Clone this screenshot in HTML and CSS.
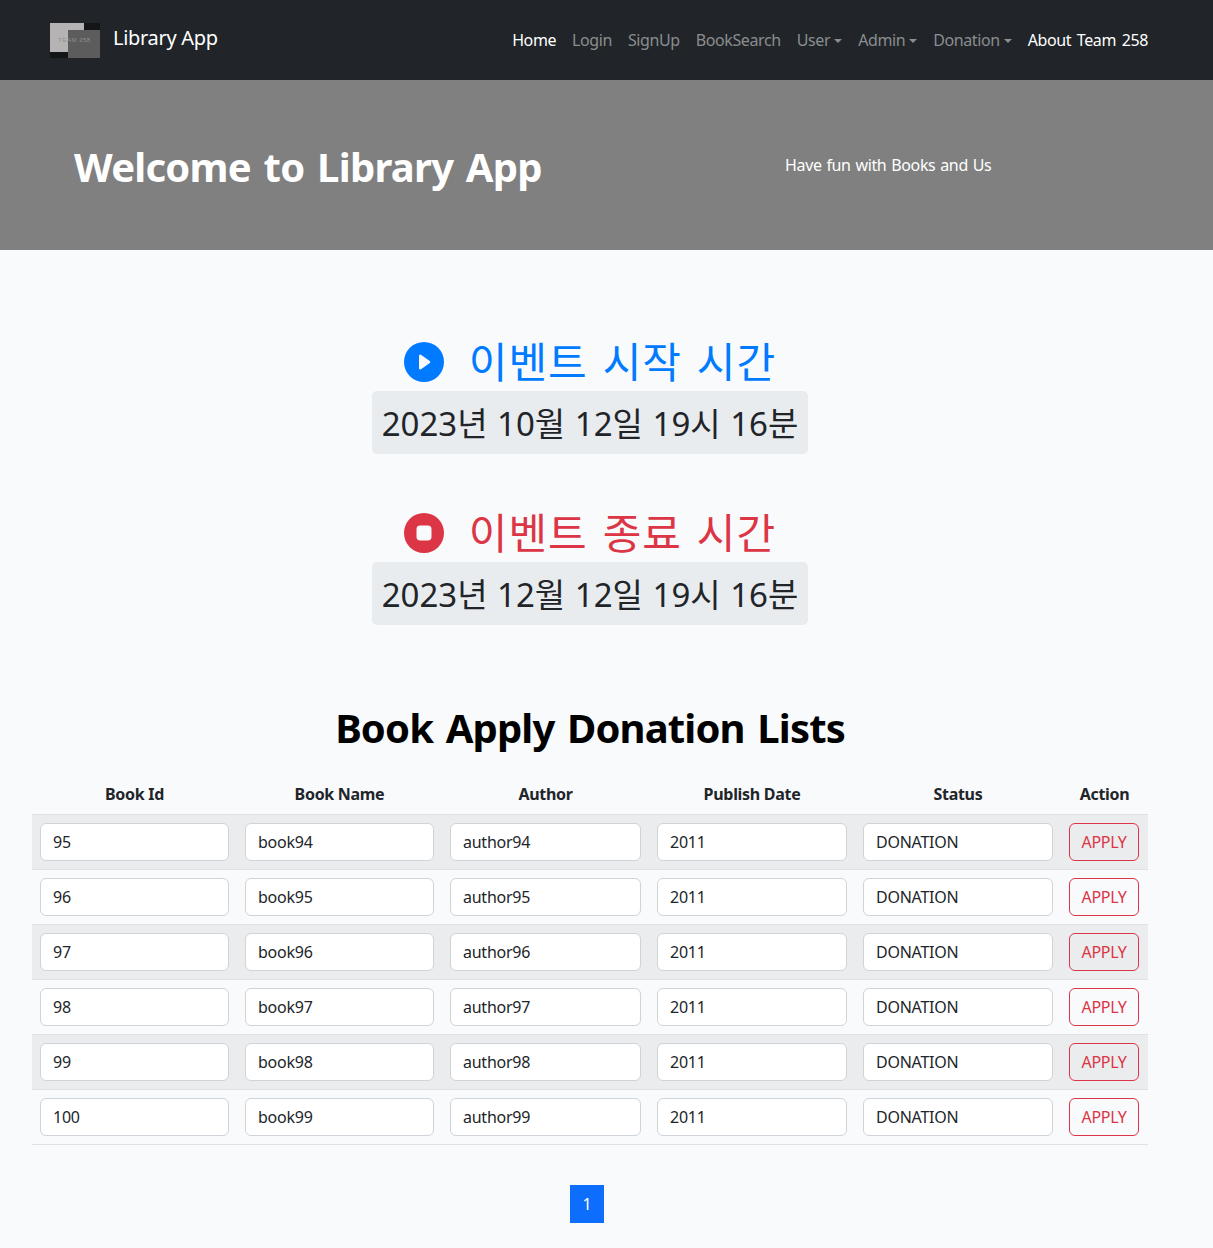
FILE: index.html
```html
<!DOCTYPE html>
<html lang="ko">
<head>
    <meta charset="UTF-8">
    <meta name="viewport" content="width=device-width, initial-scale=1.0">
    <title>Library App</title>
    <link rel="stylesheet" href="styles.css">
</head>
<body>

    <!-- Navbar -->
    <nav class="navbar">
        <a class="brand" href="#">
            <svg class="brand-logo" width="50" height="35" viewBox="0 0 50 35">
                <rect width="50" height="35" fill="#141516"/>
                <rect width="34" height="29" fill="#b5b3b3"/>
                <rect x="18" y="7" width="32" height="28" fill="#5c5c5c"/>
                <text x="24.5" y="19" text-anchor="middle" font-size="6" letter-spacing="0.5" fill="#8f8f8f" font-family="Liberation Sans">TEAM 258</text>
            </svg>
            Library App
        </a>
        <ul class="nav-links">
            <li><a class="nav-link active" href="#">Home</a></li>
            <li><a class="nav-link" href="#">Login</a></li>
            <li><a class="nav-link" href="#">SignUp</a></li>
            <li><a class="nav-link" href="#">BookSearch</a></li>
            <li><a class="nav-link caret" href="#">User</a></li>
            <li><a class="nav-link caret" href="#">Admin</a></li>
            <li><a class="nav-link caret" href="#">Donation</a></li>
            <li><a class="nav-link active" href="#">About Team 258</a></li>
        </ul>
    </nav>

    <!-- Hero -->
    <header class="hero">
        <h1>Welcome to Library App</h1>
        <p class="lead">Have fun with Books and Us</p>
    </header>

    <main class="content">

        <!-- Event times -->
        <section class="event">
            <h2 class="event-title start">
                <svg width="40" height="40" viewBox="0 0 16 16" fill="currentColor"><path d="M16 8A8 8 0 1 1 0 8a8 8 0 0 1 16 0zM6.79 5.093A.5.5 0 0 0 6 5.5v5a.5.5 0 0 0 .79.407l3.5-2.5a.5.5 0 0 0 0-.814l-3.5-2.5z"/></svg>
                <span class="event-label">이벤트 시작 시간</span>
            </h2>
            <div class="event-time">2023년 10월 12일 19시 16분</div>
        </section>

        <section class="event">
            <h2 class="event-title stop">
                <svg width="40" height="40" viewBox="0 0 16 16" fill="currentColor"><path d="M16 8A8 8 0 1 1 0 8a8 8 0 0 1 16 0zM6.5 5A1.5 1.5 0 0 0 5 6.5v3A1.5 1.5 0 0 0 6.5 11h3A1.5 1.5 0 0 0 11 9.5v-3A1.5 1.5 0 0 0 9.5 5h-3z"/></svg>
                <span class="event-label">이벤트 종료 시간</span>
            </h2>
            <div class="event-time">2023년 12월 12일 19시 16분</div>
        </section>

        <!-- Table -->
        <h2 class="list-title">Book Apply Donation Lists</h2>

        <table class="book-table">
            <thead>
                <tr>
                    <th class="col-id">Book Id</th>
                    <th class="col-name">Book Name</th>
                    <th class="col-author">Author</th>
                    <th class="col-date">Publish Date</th>
                    <th class="col-status">Status</th>
                    <th>Action</th>
                </tr>
            </thead>
            <tbody id="rows"></tbody>
        </table>

        <div class="pagination"><a class="page" href="#">1</a></div>
    </main>

    <script>
        let rows = document.getElementById("rows");
        for (let i = 95; i <= 100; i++) {
            let values = [i, "book" + (i - 1), "author" + (i - 1), 2011, "DONATION"];
            let tr = document.createElement("tr");
            values.forEach(v => {
                let td = document.createElement("td");
                let input = document.createElement("input");
                input.className = "form-input";
                input.value = v;
                td.appendChild(input);
                tr.appendChild(td);
            });
            let td = document.createElement("td");
            td.innerHTML = '<button class="apply-btn">APPLY</button>';
            tr.appendChild(td);
            rows.appendChild(tr);
        }
    </script>

</body>
</html>
```

FILE: styles.css
```css
* { box-sizing: border-box; }
body {
    margin: 0;
    background-color: #f9fafc;
    color: #212529;
    font-family: "Noto Sans", "Noto Sans CJK KR", sans-serif;
    font-size: 16px;
}
a { text-decoration: none; }

/* Navbar */
.navbar {
    display: flex;
    justify-content: space-between;
    align-items: center;
    height: 80px;
    padding: 0 65px 0 50px;
    background-color: #212529;
}
.brand {
    display: flex;
    align-items: center;
    gap: 13px;
    color: white;
    font-size: 20px;
    letter-spacing: -0.3px;
    margin-top: -6px;
}
.brand-logo { margin-top: 6px; }
.nav-links {
    display: flex;
    gap: 16px;
    list-style: none;
    margin: 0;
    padding: 0;
    letter-spacing: -0.4px;
    word-spacing: 2px;
}
.nav-link { color: #8b8d8f; }
.nav-link.active { color: white; }
.caret::after {
    content: "";
    display: inline-block;
    margin-left: 4px;
    vertical-align: 3px;
    border-top: 4.8px solid;
    border-left: 4.8px solid transparent;
    border-right: 4.8px solid transparent;
}

/* Hero */
.hero {
    display: flex;
    align-items: center;
    height: 170px;
    padding: 2px 0 0 74px;
    background-color: #808080;
    color: white;
}
.hero h1 {
    width: 711px;
    margin: 0;
    font-size: 40px;
    font-weight: 700;
    letter-spacing: -0.75px;
    word-spacing: 3px;
}
.lead {
    margin: 0 0 2px;
    letter-spacing: -0.35px;
    word-spacing: 1px;
}

/* Events */
.content { padding: 83px 65px 0 32px; }
.event {
    display: flex;
    flex-direction: column;
    align-items: center;
    margin-bottom: 50px;
}
.event-title {
    display: flex;
    align-items: center;
    gap: 25px;
    height: 58px;
    margin: 0;
    font-size: 42px;
    font-weight: 400;
    letter-spacing: 1px;
    word-spacing: 3px;
}
.event-label { margin-top: -6px; }
.event-title.start { color: #007bff; }
.event-title.stop { color: #dc3545; }
.event-time {
    height: 63px;
    padding: 0 10px;
    border-radius: 5px;
    background-color: #e9ecef;
    font-size: 33px;
    line-height: 65px;
    word-spacing: 1px;
}

/* Table */
.list-title {
    margin: 76px 0 18px;
    color: black;
    font-size: 40px;
    font-weight: 700;
    line-height: 54px;
    letter-spacing: -0.85px;
    word-spacing: 3px;
    text-align: center;
}
.book-table {
    width: 100%;
    table-layout: fixed;
    border-collapse: collapse;
}
.col-id, .col-name { width: 205px; }
.col-author { width: 207px; }
.col-date { width: 206px; }
.col-status { width: 206px; }
.book-table th {
    padding: 9px 8px 7px;
    height: 41px;
    font-weight: 700;
    letter-spacing: -0.3px;
    text-align: center;
    border-bottom: 1px solid #dee2e6;
}
.book-table td {
    padding: 8px;
    border-bottom: 1px solid #dee2e6;
}
.book-table tbody tr:nth-child(odd) { background-color: #ebecee; }
.form-input {
    display: block;
    width: 100%;
    height: 38px;
    padding: 6px 12px;
    border: 1px solid #ced4da;
    border-radius: 6px;
    background-color: white;
    color: #212529;
    font-family: inherit;
    font-size: 16px;
    letter-spacing: -0.25px;
}
.apply-btn {
    width: 70px;
    height: 38px;
    padding: 0;
    border: 1px solid #dc3545;
    border-radius: 6px;
    background: transparent;
    color: #dc3545;
    font-family: inherit;
    font-size: 16px;
    letter-spacing: -0.3px;
}

/* Pagination */
.pagination {
    display: flex;
    justify-content: center;
    padding: 40px 0 25px;
    margin-left: -6px;
}
.page {
    width: 34px;
    height: 38px;
    background-color: #0d6efd;
    color: white;
    line-height: 38px;
    text-align: center;
}
```
